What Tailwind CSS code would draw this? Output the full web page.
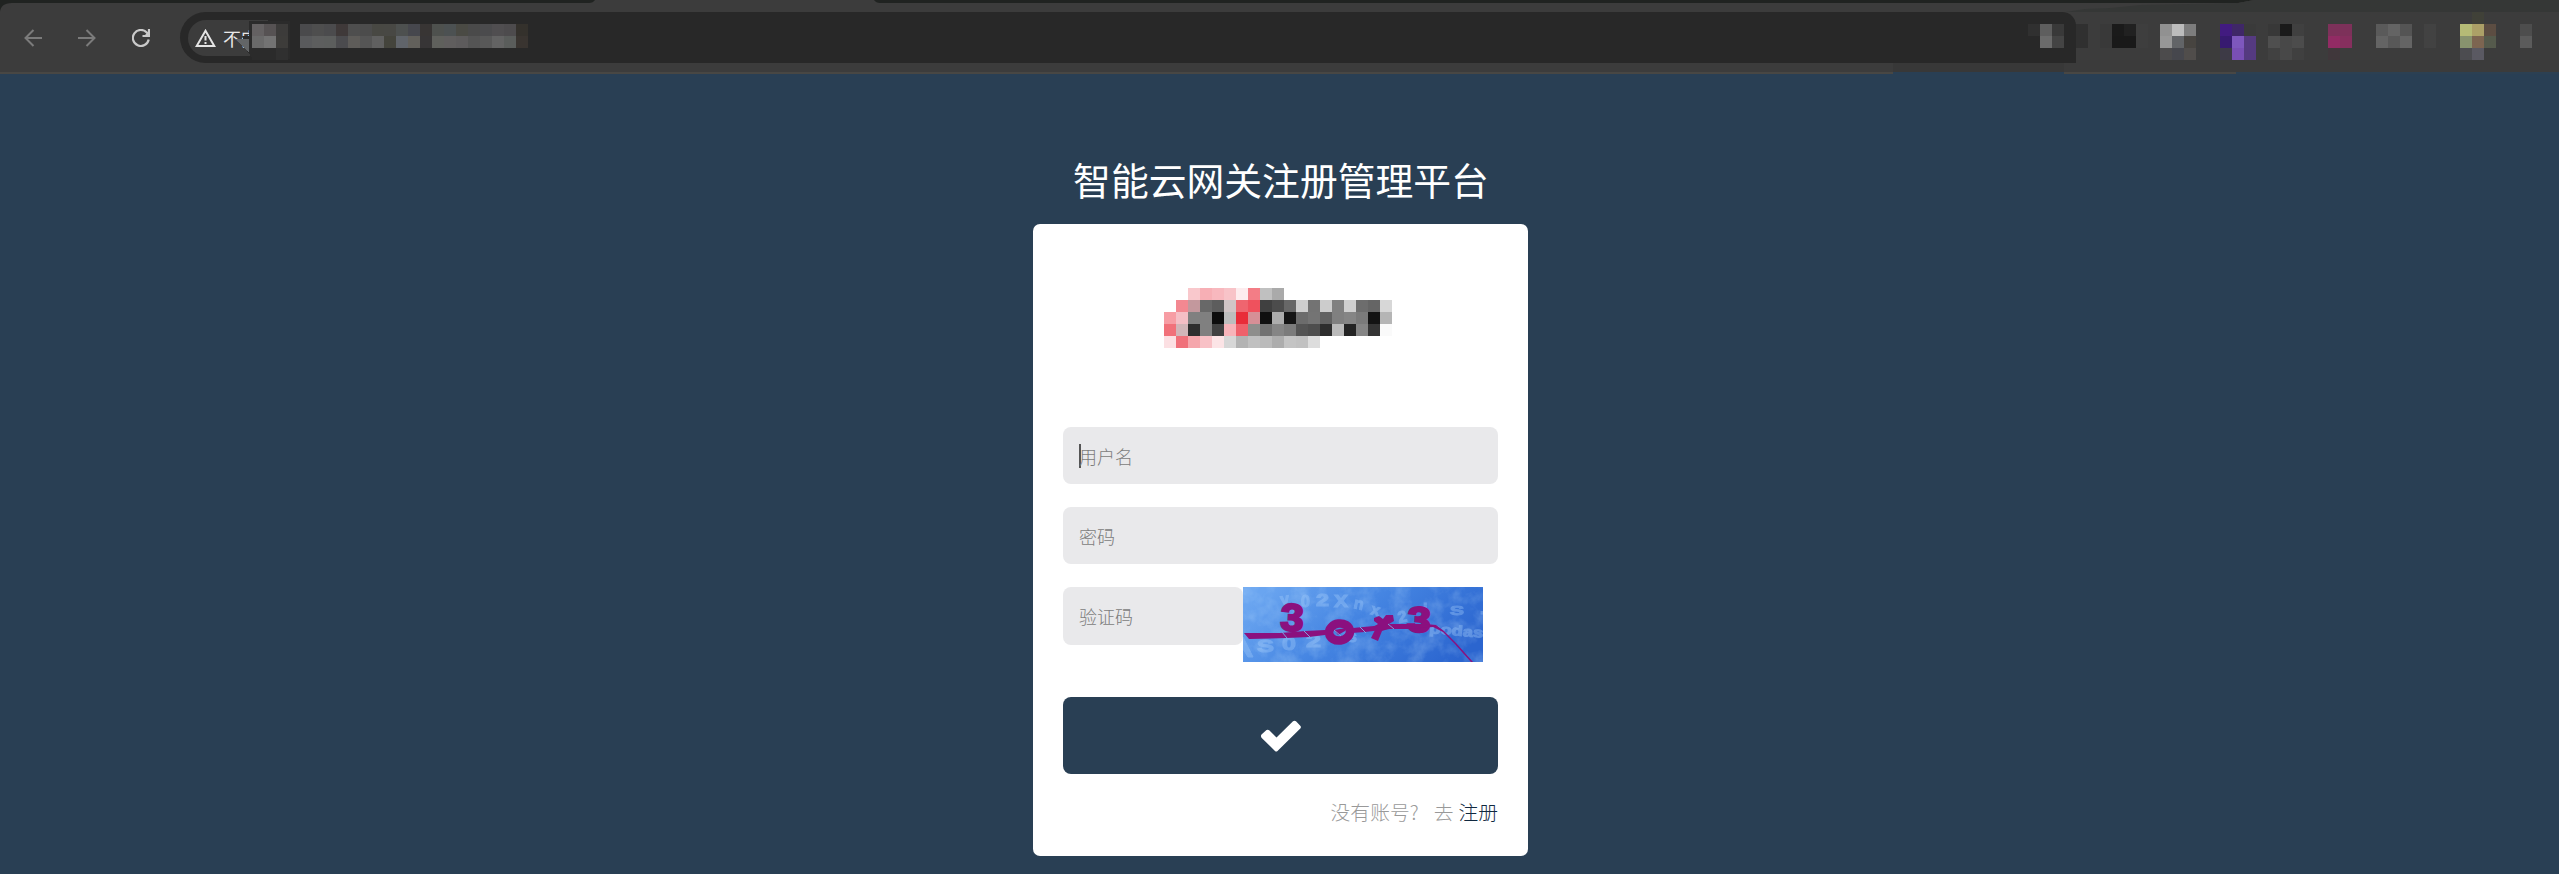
<!DOCTYPE html>
<html lang="zh-CN">
<head>
<meta charset="utf-8">
<title>智能云网关注册管理平台</title>
<script src="https://cdn.jsdelivr.net/npm/@tailwindcss/browser@4"></script>
</head>
<body class="h-[874px] overflow-hidden bg-[#293f54] font-['Noto_Sans_CJK_SC',sans-serif]">
<header class="relative flex h-[74px] flex-col border-b-2 border-[#484744] bg-[#3c3c3c]">
  <svg class="absolute top-0 left-0" width="2559" height="74" viewBox="0 0 2559 74">
    <path d="M0 0H595Q593 3 589 3H12Q0 3 0 13Z" fill="#202321"/>
    <path d="M874 0H2254L2238 3H880Q876 3 874 0Z" fill="#202321"/>
    <path d="M2254 0H2559V12H2066L2085 9L2110 8L2140 5L2238 3Z" fill="#353736"/>
    <rect x="1893" y="60" width="666" height="12" fill="#383838"/>
    <rect x="2064" y="60" width="495" height="12" fill="#3b3b3b"/>
    <rect x="1893" y="72" width="171" height="2" fill="#293f54"/>
    <rect x="2236" y="72" width="323" height="2" fill="#2c4052"/>
  </svg>
  <div class="relative mt-3 flex h-[51px] items-center">
    <nav class="flex w-[180px] shrink-0 items-center pl-[24px]">
      <svg width="18" height="18" viewBox="0 0 18 18" fill="none" stroke="#7b7b7b" stroke-width="2"><path d="M18 9H2M9.500 1L1.500 9L9.500 17"/></svg>
      <svg class="ml-9" width="18" height="18" viewBox="0 0 18 18" fill="none" stroke="#7b7b7b" stroke-width="2"><path d="M0 9H16M8.500 1L16.500 9L8.500 17"/></svg>
      <svg class="ml-9" width="18" height="18" viewBox="0 0 18 18" fill="none" stroke="#cacaca" stroke-width="2.200"><path d="M16.700 10.500A8 8 0 1 1 14.800 3.600L17 6"/><path d="M17 0V7H10.500"/><path d="M17 2V7H12Z" fill="#cacaca" stroke="none"/></svg>
    </nav>
    <div class="flex h-[51px] w-[1896px] items-center rounded-l-[26px] rounded-tr-[14px] bg-[#282828] pl-2">
      <div class="flex h-9 w-[80px] items-center rounded-l-full bg-[#3c3c3c] pl-[7px] text-[18px] leading-none text-[#e8e8e8]">
        <svg class="shrink-0" width="21" height="18" viewBox="0 0 21 18"><path d="M10.500 1.800L19.300 17H1.700Z" fill="none" stroke="#e5e5e5" stroke-width="2"/><path d="M10.500 7V11.500M10.500 13V15" stroke="#e5e5e5" stroke-width="2"/></svg>
        <span class="ml-[7px] whitespace-nowrap">不安</span>
      </div>
    </div>
  </div>
  <svg id="chrome-tiles" class="absolute top-0 left-0" width="2559" height="72" shape-rendering="crispEdges"><path d="M238 39L253 59H290V21H249V36H243V39Z" fill="#2b2b2b"/><path d="M236 39L249 53V39Z" fill="#626567"/></svg>
</header>

<main class="flex flex-col items-center">
  <h1 class="mt-[77px] ml-[3px] flex h-[56px] items-center whitespace-nowrap text-[37.8px] leading-none text-white">智能云网关注册管理平台</h1>
  <form class="mt-[17px] ml-[2px] flex h-[632px] w-[495px] flex-col rounded-[7px] bg-white px-[30px]">
    <div class="flex h-[203px] pt-[64px] pl-[101px]">
      <svg id="logo" width="228" height="60" shape-rendering="crispEdges"></svg>
    </div>
    <div class="flex h-[57px] items-center rounded-lg bg-[#e9e9eb] pl-4 text-[18px] leading-none font-light text-[#7c7c7c]"><span class="h-6 w-[2px] shrink-0 bg-[#555]"></span><span class="-ml-[2px]">用户名</span></div>
    <div class="mt-[23px] flex h-[57px] items-center rounded-lg bg-[#e9e9eb] pl-4 text-[18px] leading-none font-light text-[#7c7c7c]">密码</div>
    <div class="mt-[23px] flex h-[75px] items-start">
      <div class="flex h-[58px] w-[180px] items-center rounded-lg bg-[#e9e9eb] pl-4 text-[18px] leading-none font-light text-[#7c7c7c]">验证码</div>
      <svg width="240" height="75" viewBox="0 0 240 75" font-family="Liberation Sans, sans-serif" font-weight="700">
        <defs>
          <linearGradient id="sky" x1="0" y1="0.300" x2="1" y2="0.650"><stop offset="0" stop-color="#6aa5f0"/><stop offset=".45" stop-color="#4585e2"/><stop offset="1" stop-color="#2b65cf"/></linearGradient>
          <filter id="paper" x="0" y="0" width="1" height="1"><feTurbulence type="fractalNoise" baseFrequency=".06" numOctaves="4" seed="4"/><feColorMatrix values="0 0 0 0 .55  0 0 0 0 .78  0 0 0 0 1  1.300 0 0 0 -.5"/></filter>
        </defs>
        <rect width="240" height="75" fill="url(#sky)"/>
        <rect width="240" height="75" filter="url(#paper)" opacity=".4"/>
        <g fill="#a4cdfb" stroke="#a4cdfb" stroke-width="1" opacity=".36" font-size="16">
          <text x="38" y="18" transform="rotate(-8 38 18)">v</text>
          <text x="58" y="20">0</text><text x="73" y="19" textLength="13" lengthAdjust="spacingAndGlyphs">2</text><text x="91" y="20" textLength="14" lengthAdjust="spacingAndGlyphs">X</text>
          <text x="110" y="21" transform="rotate(12 110 21)">n</text><text x="127" y="27" transform="rotate(14 127 27)">x</text>
          <text x="156" y="36" transform="rotate(-12 156 36)">2</text><text x="180" y="28">j</text>
          <text x="207" y="28" font-size="13" textLength="14" lengthAdjust="spacingAndGlyphs">S</text><text x="237" y="27">.</text>
          <text x="186" y="46" font-size="14" textLength="54" lengthAdjust="spacingAndGlyphs" transform="rotate(5 186 46)">podas</text>
          <text x="14" y="65" font-size="17" textLength="17" lengthAdjust="spacingAndGlyphs">S</text><text x="39" y="63" font-size="18" textLength="14" lengthAdjust="spacingAndGlyphs">0</text><text x="63" y="60" font-size="17" textLength="15" lengthAdjust="spacingAndGlyphs">2</text><text x="105" y="55">s</text>
          <path d="M0 50L10 70L5 70L0 62Z"/>
        </g>
        <g fill="#8b107f" stroke="#8b107f" stroke-width="2.400">
          <text x="37" y="43" font-size="38" textLength="23" lengthAdjust="spacingAndGlyphs" transform="rotate(3 38 43)">3</text>
          <text x="164" y="44" font-size="35" textLength="23" lengthAdjust="spacingAndGlyphs" transform="rotate(3 165 43)">3</text>
        </g>
        <path d="M131 31L136 29L140 32L143 28L150 28L151 34L146 37L145 42L139 44L135 54L128 51L132 43L130 40L135 37L131 34Z" fill="#8b107f"/>
        <ellipse cx="96.500" cy="45" rx="10.500" ry="8.500" fill="none" stroke="#8b107f" stroke-width="8.500" transform="rotate(-8 96.500 45)"/>
        <path d="M91 43L103 41L102 44L95 48Z" fill="#8b107f"/>
        <path d="M1 46H37L62 44L82 43V48L66 50L44 51L6 52Z" fill="#8b107f"/>
        <path d="M110 41L131 39L147 37H183L193 38L201 44L213 56L230 75H228L211 56L200 45L190 40L165 42H147L122 45L108 46Z" fill="#8b107f"/>
        <path d="M39 45L44 51M61 44L67 50M117 40L123 46M145 37L151 42M91 43L98 49" stroke="#7ca2df" stroke-width="1"/>
      </svg>
    </div>
    <button type="button" class="mt-[35px] flex h-[77px] shrink-0 items-center justify-center rounded-lg bg-[#293f54]">
      <svg width="42" height="32" viewBox="0 0 42 32"><path d="M1.500 14.500L6.500 10Q8 9.200 9.500 10.500L16.500 17.500L33 1.300Q34.500.2 36 1.300L40.500 6Q41.300 7.300 40.300 8.500L17.500 31Q16.200 32 15 31L1.500 17.700Q.4 16 1.500 14.500Z" fill="white"/></svg>
    </button>
    <p class="mt-[28px] flex h-5 items-center justify-end whitespace-nowrap text-[19.800px] leading-none font-light text-[#999]"><span>没有账号?</span><span class="ml-[15px]">去</span><a class="ml-[5px] text-[#10283f]">注册</a></p>
  </form>
</main>
<script>
const NS = 'http://www.w3.org/2000/svg';
function tile(svg, x, y, color) {
  const r = document.createElementNS(NS, 'rect');
  r.setAttribute('x', x); r.setAttribute('y', y);
  r.setAttribute('width', 12); r.setAttribute('height', 12);
  r.setAttribute('fill', '#' + color);
  svg.appendChild(r);
}
function tiles(svg, x, y, rows) {
  rows.forEach((row, j) => row.split(' ').forEach((c, i) => { if (c !== '-') tile(svg, x + i * 12, y + j * 12, c); }));
}
const bar = document.getElementById('chrome-tiles');
tiles(bar, 252, 24, ['646162 565253 3c3b3a', '6a6a6a 737373 3d3c3a', '2b2b2b 2b2b2b 303030']);
tiles(bar, 300, 24, [
  '4a4a4c 4e4e4e 4b4b4d 3f3939 4e4e4e 4c4c4c 484843 484844 4d504f 46474d 383534 4e514e 4c5152 4a4a44 4a4a4a 4b4b4d 504e50 4d4b4d 34312c',
  '595a5c 5d5e5e 5c5e5d 4b4b4e 5e5c59 555555 606060 44443c 60646a 62605b 373536 5f605c 605e5e 5d5b5c 545454 585858 636363 5a5d5b 393430']);
tiles(bar, 2028, 24, ['303030 5e5e5e 393939 282828 303030', '282828 6b6b6b 444444 282828 303030']);
tiles(bar, 2100, 24, ['393939 1a1a1a 212121 3e3e3e', '393939 191919 191919 3e3e3e']);
tiles(bar, 2160, 24, ['919191 bcbcbc 7d7d7d', '979797 626467 474440', '4c4b4c 46474d 504d4b']);
tiles(bar, 2220, 24, ['421b80 3f2767 3a3a3a', '371a70 7e57bd 553a80', '3d3a46 794fb5 553a80']);
tiles(bar, 2268, 24, ['383838 1a1a1a 404040', '4f4f4f 484848 4c4c4c', '414141 484848 404040']);
tiles(bar, 2328, 24, ['7d315a 7d315a', '922b64 862f5e', '40373b -']);
tiles(bar, 2376, 24, ['5a5a5a 646464 545454 - 424242', '646464 585858 646464 - 424242']);
tiles(bar, 2460, 24, ['b5bb76 aca067 5c4d42', '88936e 7d6551 555a4c', '4c4c50 5a5962 -']);
tiles(bar, 2520, 24, ['4d4d4d', '5b5b5b']);
tiles(bar, 2472, 12, ['404138']);
tiles(document.getElementById('logo'), 0, 0, [
  '- - f9c8cc f7afb5 f8b8be f8c3c8 fdecee f37d86 c0c0c0 aaaaaa',
  '- f38891 c3989d 686868 5d5d5d d1c5c6 ef656f ef515d 404040 4c4c4c 676767 cecece 737373 cccccc 808080 cfcfcf 6d6d6d 656565 d7d7d7',
  'f79da4 f5bec5 808080 808080 0d0d0d bdbdbd e92c39 d68f96 101010 acacac 141414 6c6c6c 747474 626262 808080 858585 7a7a7a 131313 b5b5b5',
  'f1717a d2b5b8 2e2e2e 808080 414141 f7b4ba ef616b 8e8e8c 717171 858585 7b7b7b 545454 4e4e4e 2d2d2d bababa 232323 858585 343434 fafafa',
  'fce0e3 f0707a f5a6ac f8c1c6 fce4e6 d7d7d7 b3b3b3 c0c0c0 bbbbbb adadad c4c4c4 c1c1c1 dddddd']);
</script>
</body>
</html>
